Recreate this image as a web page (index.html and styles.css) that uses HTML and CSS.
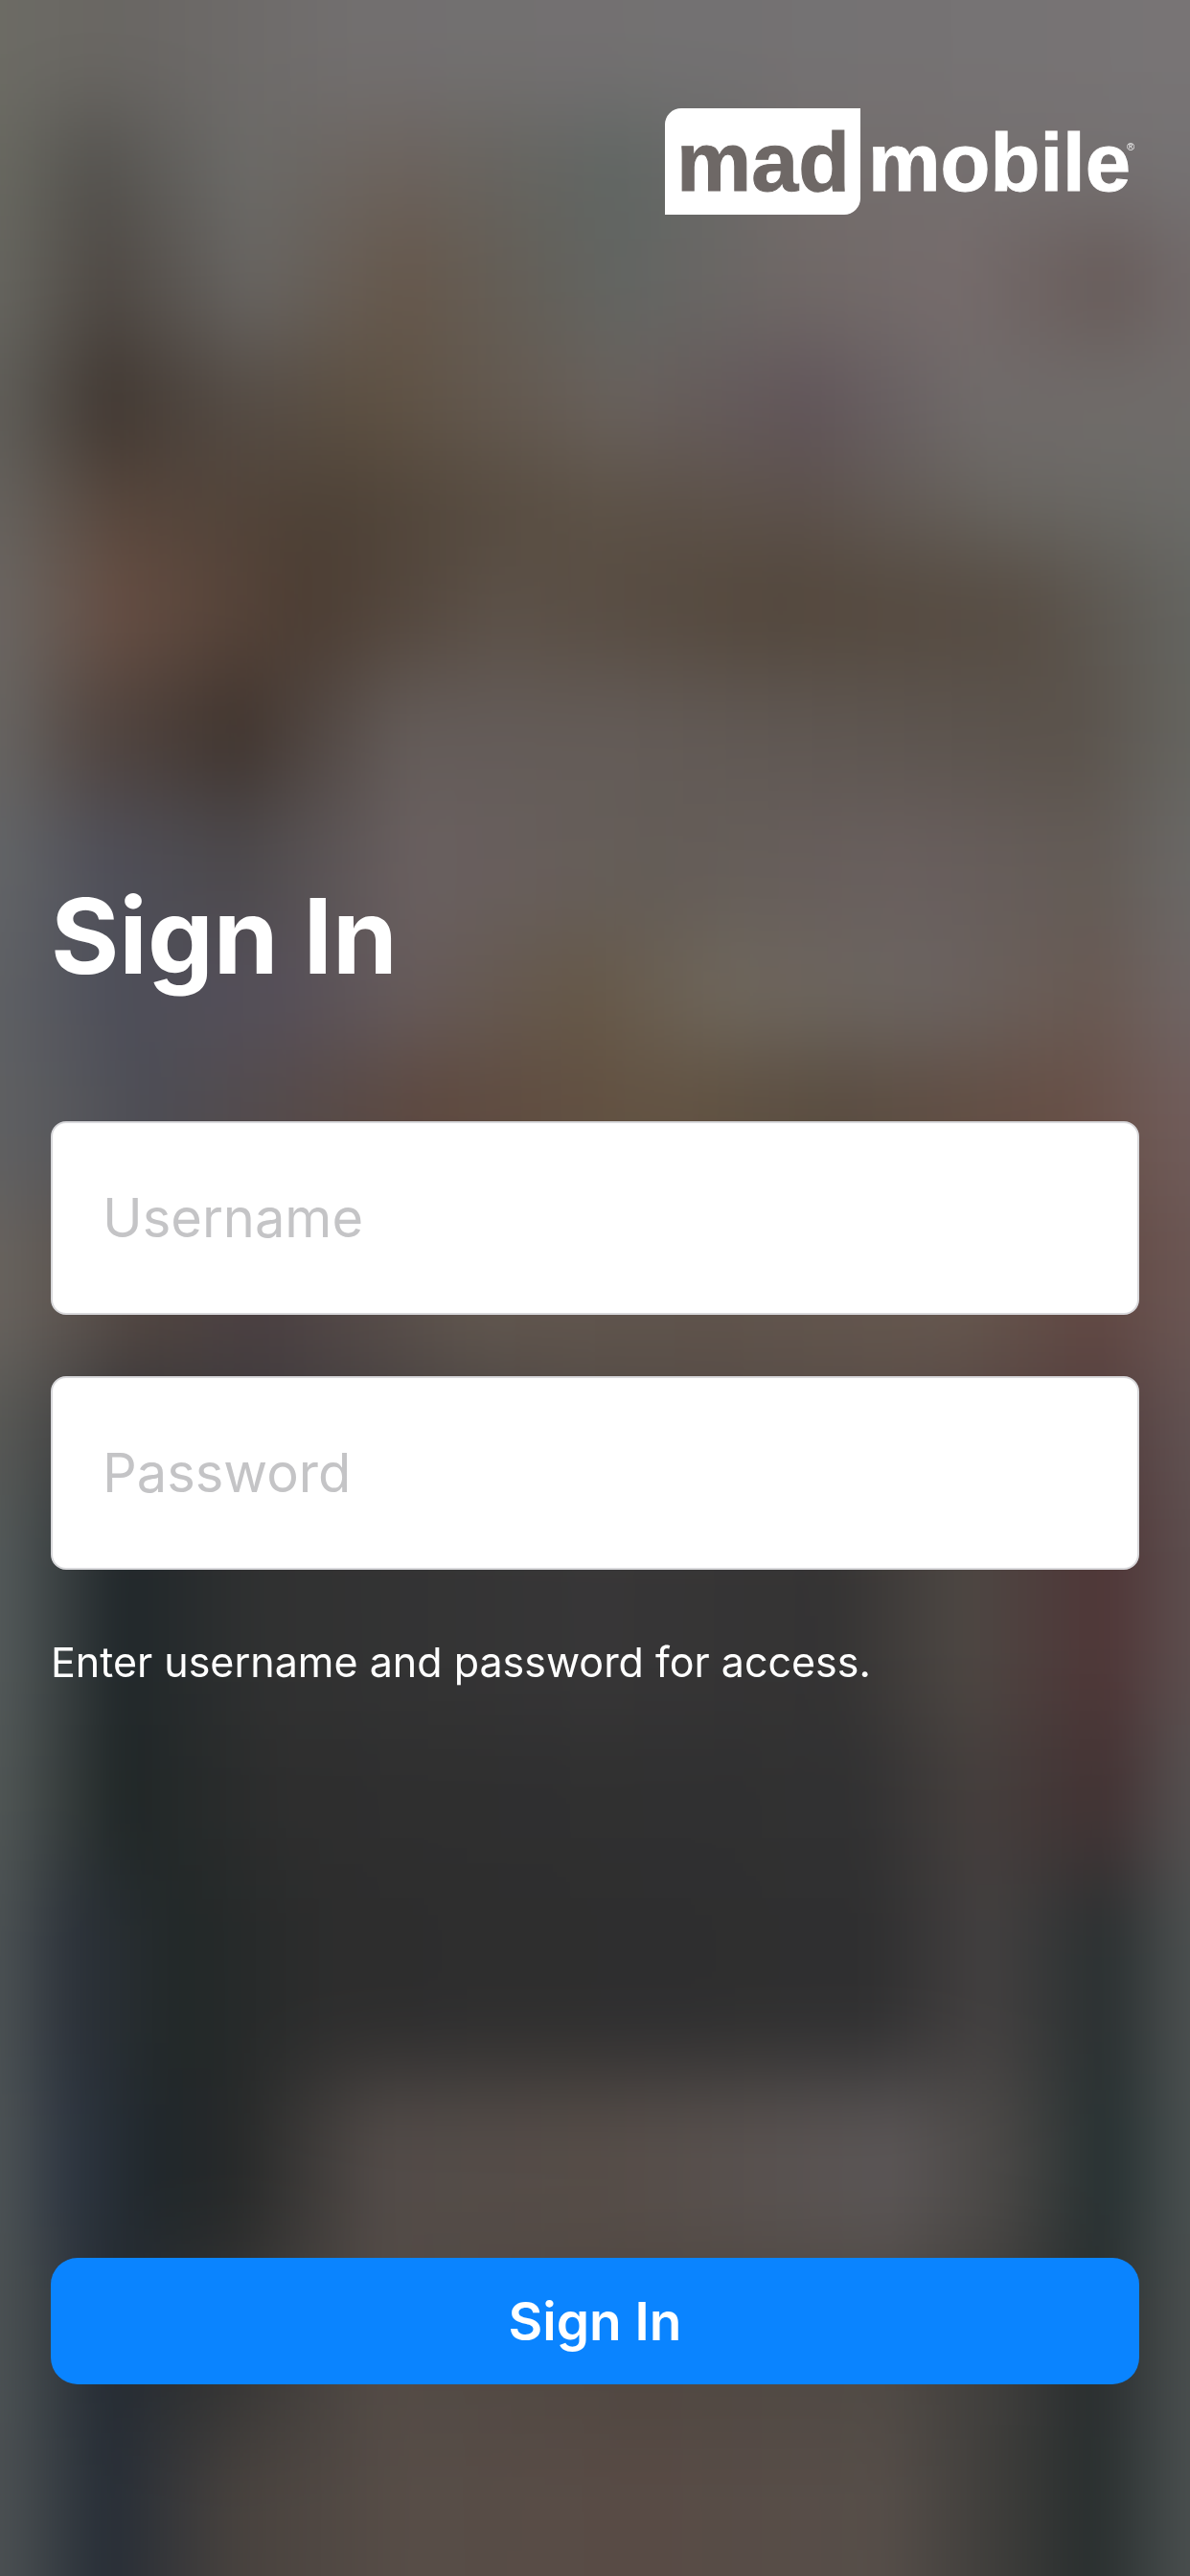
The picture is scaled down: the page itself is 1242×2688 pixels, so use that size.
FILE: index.html
```html
<!DOCTYPE html>
<html lang="en">
<head>
  <meta charset="UTF-8" />
  <meta name="viewport" content="width=device-width, initial-scale=1.0" />
  <title>Mad Mobile - Sign In</title>
  <link rel="stylesheet" href="styles.css">
</head>
<body>
  <!-- blurred store backdrop: horizontal colour bands, softened together -->
  <svg class="backdrop" viewBox="0 0 725 1568" preserveAspectRatio="none" aria-hidden="true">
    <defs>
      <filter id="soften" filterUnits="userSpaceOnUse" x="-60" y="-120" width="845" height="1808" color-interpolation-filters="sRGB">
        <feGaussianBlur stdDeviation="12 28" />
      </filter>
      <linearGradient id="across" gradientUnits="userSpaceOnUse" x1="0" y1="0" x2="725" y2="0" />
      <linearGradient id="b1" href="#across"><stop offset="0" stop-color="#6c6b64"/><stop offset=".1" stop-color="#696663"/><stop offset=".3" stop-color="#726f6f"/><stop offset=".6" stop-color="#737172"/><stop offset="1" stop-color="#787475"/></linearGradient>
      <linearGradient id="b2" href="#across"><stop offset="0" stop-color="#686860"/><stop offset=".08" stop-color="#54524e"/><stop offset=".2" stop-color="#6b6a67"/><stop offset=".34" stop-color="#6c635d"/><stop offset=".52" stop-color="#606663"/><stop offset=".68" stop-color="#746d6c"/><stop offset="1" stop-color="#757273"/></linearGradient>
      <linearGradient id="b3" href="#across"><stop offset="0" stop-color="#66655f"/><stop offset=".09" stop-color="#4f4944"/><stop offset=".21" stop-color="#686562"/><stop offset=".34" stop-color="#66584c"/><stop offset=".52" stop-color="#626562"/><stop offset=".66" stop-color="#6f6866"/><stop offset=".8" stop-color="#766c6c"/><stop offset=".93" stop-color="#675b59"/><stop offset="1" stop-color="#716969"/></linearGradient>
      <linearGradient id="b4" href="#across"><stop offset="0" stop-color="#5f5d58"/><stop offset=".09" stop-color="#403731"/><stop offset=".2" stop-color="#544b44"/><stop offset=".32" stop-color="#5e5143"/><stop offset=".52" stop-color="#69615c"/><stop offset=".68" stop-color="#61555a"/><stop offset=".82" stop-color="#706b6a"/><stop offset="1" stop-color="#706c6a"/></linearGradient>
      <linearGradient id="b5" href="#across"><stop offset="0" stop-color="#65615c"/><stop offset=".1" stop-color="#57463c"/><stop offset=".28" stop-color="#4d4136"/><stop offset=".5" stop-color="#5c5145"/><stop offset=".68" stop-color="#5d524c"/><stop offset=".85" stop-color="#696661"/><stop offset="1" stop-color="#6b6b68"/></linearGradient>
      <linearGradient id="b6" href="#across"><stop offset="0" stop-color="#6a6561"/><stop offset=".1" stop-color="#664e43"/><stop offset=".26" stop-color="#4c3d33"/><stop offset=".42" stop-color="#5c5148"/><stop offset=".65" stop-color="#53473c"/><stop offset=".86" stop-color="#574d44"/><stop offset="1" stop-color="#646460"/></linearGradient>
      <linearGradient id="b7" href="#across"><stop offset="0" stop-color="#676461"/><stop offset=".08" stop-color="#524641"/><stop offset=".2" stop-color="#40342e"/><stop offset=".34" stop-color="#645c59"/><stop offset=".52" stop-color="#645c58"/><stop offset=".7" stop-color="#5f5752"/><stop offset=".9" stop-color="#5a524b"/><stop offset="1" stop-color="#65645f"/></linearGradient>
      <linearGradient id="b8" href="#across"><stop offset="0" stop-color="#626467"/><stop offset=".09" stop-color="#4f4f59"/><stop offset=".2" stop-color="#4c494c"/><stop offset=".35" stop-color="#6a6060"/><stop offset=".55" stop-color="#645d57"/><stop offset=".76" stop-color="#695f5e"/><stop offset=".92" stop-color="#635b56"/><stop offset="1" stop-color="#6a6866"/></linearGradient>
      <linearGradient id="b9" href="#across"><stop offset="0" stop-color="#5e6064"/><stop offset=".1" stop-color="#4d4e59"/><stop offset=".24" stop-color="#57505a"/><stop offset=".34" stop-color="#665b5b"/><stop offset=".49" stop-color="#665848"/><stop offset=".61" stop-color="#6f675c"/><stop offset=".78" stop-color="#6b6461"/><stop offset=".92" stop-color="#695a53"/><stop offset="1" stop-color="#6f6564"/></linearGradient>
      <linearGradient id="b10" href="#across"><stop offset="0" stop-color="#5f6062"/><stop offset=".12" stop-color="#4d4d55"/><stop offset=".36" stop-color="#5d483f"/><stop offset=".55" stop-color="#635342"/><stop offset=".7" stop-color="#594c40"/><stop offset=".9" stop-color="#674f46"/><stop offset="1" stop-color="#705c5a"/></linearGradient>
      <linearGradient id="b11" href="#across"><stop offset="0" stop-color="#68635e"/><stop offset=".12" stop-color="#524641"/><stop offset=".22" stop-color="#4b4042"/><stop offset=".4" stop-color="#61574f"/><stop offset=".6" stop-color="#60544c"/><stop offset=".8" stop-color="#66584f"/><stop offset=".92" stop-color="#614843"/><stop offset="1" stop-color="#6b5653"/></linearGradient>
      <linearGradient id="b12" href="#across"><stop offset="0" stop-color="#575855"/><stop offset=".1" stop-color="#353538"/><stop offset=".25" stop-color="#3f3b3d"/><stop offset=".5" stop-color="#514944"/><stop offset=".75" stop-color="#564a45"/><stop offset=".93" stop-color="#523d3d"/><stop offset="1" stop-color="#615252"/></linearGradient>
      <linearGradient id="b13" href="#across"><stop offset="0" stop-color="#545a5a"/><stop offset=".1" stop-color="#20272a"/><stop offset=".22" stop-color="#303131"/><stop offset=".5" stop-color="#373637"/><stop offset=".7" stop-color="#343333"/><stop offset=".81" stop-color="#4d4743"/><stop offset=".93" stop-color="#4f3637"/><stop offset="1" stop-color="#5d4e4e"/></linearGradient>
      <linearGradient id="b14" href="#across"><stop offset="0" stop-color="#515756"/><stop offset=".1" stop-color="#202727"/><stop offset=".24" stop-color="#2e2e2e"/><stop offset=".72" stop-color="#313132"/><stop offset=".82" stop-color="#453f3d"/><stop offset=".93" stop-color="#423233"/><stop offset="1" stop-color="#555050"/></linearGradient>
      <linearGradient id="b15" href="#across"><stop offset="0" stop-color="#4c5254"/><stop offset=".06" stop-color="#2c323a"/><stop offset=".15" stop-color="#222828"/><stop offset=".28" stop-color="#2d2d2d"/><stop offset=".73" stop-color="#2f2f30"/><stop offset=".83" stop-color="#434040"/><stop offset=".93" stop-color="#2a3031"/><stop offset="1" stop-color="#4c5050"/></linearGradient>
      <linearGradient id="b16" href="#across"><stop offset="0" stop-color="#4d5355"/><stop offset=".06" stop-color="#2d3540"/><stop offset=".13" stop-color="#20272b"/><stop offset=".2" stop-color="#272929"/><stop offset=".32" stop-color="#524b48"/><stop offset=".5" stop-color="#564d48"/><stop offset=".75" stop-color="#5b5656"/><stop offset=".84" stop-color="#4a4846"/><stop offset=".93" stop-color="#263031"/><stop offset="1" stop-color="#4a5050"/></linearGradient>
      <linearGradient id="b17" href="#across"><stop offset="0" stop-color="#4c5254"/><stop offset=".09" stop-color="#242b33"/><stop offset=".18" stop-color="#313232"/><stop offset=".32" stop-color="#534b46"/><stop offset=".54" stop-color="#504741"/><stop offset=".74" stop-color="#504a45"/><stop offset=".84" stop-color="#3f3e3c"/><stop offset=".92" stop-color="#282d2e"/><stop offset="1" stop-color="#4a4f4f"/></linearGradient>
      <linearGradient id="b18" href="#across"><stop offset="0" stop-color="#4c5153"/><stop offset=".09" stop-color="#262d36"/><stop offset=".2" stop-color="#48423e"/><stop offset=".34" stop-color="#574d47"/><stop offset=".54" stop-color="#584b45"/><stop offset=".74" stop-color="#564e49"/><stop offset=".85" stop-color="#3b3b39"/><stop offset=".92" stop-color="#282e2e"/><stop offset="1" stop-color="#4a4f4f"/></linearGradient>
    </defs>
    <g filter="url(#soften)">
      <rect x="-40" y="-120" width="805" height="190" fill="url(#b1)" />
      <rect x="-40" y="70" width="805" height="65" fill="url(#b2)" />
      <rect x="-40" y="135" width="805" height="75" fill="url(#b3)" />
      <rect x="-40" y="210" width="805" height="70" fill="url(#b4)" />
      <rect x="-40" y="280" width="805" height="55" fill="url(#b5)" />
      <rect x="-40" y="335" width="805" height="75" fill="url(#b6)" />
      <rect x="-40" y="410" width="805" height="75" fill="url(#b7)" />
      <rect x="-40" y="485" width="805" height="85" fill="url(#b8)" />
      <rect x="-40" y="570" width="805" height="70" fill="url(#b9)" />
      <rect x="-40" y="640" width="805" height="90" fill="url(#b10)" />
      <rect x="-40" y="730" width="805" height="105" fill="url(#b11)" />
      <rect x="-40" y="835" width="805" height="75" fill="url(#b12)" />
      <rect x="-40" y="910" width="805" height="140" fill="url(#b13)" />
      <rect x="-40" y="1050" width="805" height="90" fill="url(#b14)" />
      <rect x="-40" y="1140" width="805" height="125" fill="url(#b15)" />
      <rect x="-40" y="1265" width="805" height="105" fill="url(#b16)" />
      <rect x="-40" y="1370" width="805" height="110" fill="url(#b17)" />
      <rect x="-40" y="1480" width="805" height="210" fill="url(#b18)" />
    </g>
  </svg>

  <div class="page">
    <header class="header">
      <svg class="logo" viewBox="0 0 495 111" role="img" aria-label="mad mobile">
        <path class="logo-box" d="M17 0H204V94A17 17 0 0 1 187 111H0V17A17 17 0 0 1 17 0Z" />
        <text class="logo-mad" x="12" y="86">mad</text>
        <text class="logo-mobile" x="212" y="86">mobile</text>
        <text class="logo-mark" x="482" y="44">®</text>
      </svg>
    </header>

    <form class="signin">
      <h1>Sign In</h1>
      <div class="fields">
        <input type="text" name="username" placeholder="Username" aria-label="Username" />
        <input type="password" name="password" placeholder="Password" aria-label="Password" />
      </div>
      <p class="hint">Enter username and password for access.</p>
      <button type="button" class="submit">Sign In</button>
    </form>
  </div>
</body>
</html>
```

FILE: styles.css
```css
* {
  box-sizing: border-box;
}

body {
  margin: 0;
  background: #4a4644;
  color: #fff;
  font-family: Inter, 'Liberation Sans', sans-serif;
}

.backdrop {
  position: fixed;
  top: 0;
  left: 0;
  width: 100%;
  height: 100%;
  z-index: -1;
}

.page {
  display: flex;
  flex-direction: column;
  min-height: 100vh;
  padding: 113px 53px 200px;
}

.header {
  display: flex;
  justify-content: flex-end;
}

.logo {
  display: block;
  width: 495px;
  height: 111px;
}

.logo-box {
  fill: #fff;
}

.logo-mad,
.logo-mobile {
  font-family: 'Liberation Sans', sans-serif;
  font-weight: 700;
  stroke-width: 1px;
}

.logo-mad {
  font-size: 88px;
  fill: #6e6866;
  stroke: #6e6866;
}

.logo-mobile {
  font-size: 85px;
  fill: #fff;
  stroke: #fff;
}

.logo-mark {
  font-family: 'Liberation Sans', sans-serif;
  font-size: 11px;
  fill: #fff;
}

.signin {
  display: flex;
  flex-direction: column;
  flex: 1;
  padding-top: 684px;
}

.signin h1 {
  margin: 0 0 126px;
  font-size: 109px;
  line-height: 136px;
  font-weight: 700;
}

.fields {
  display: flex;
  flex-direction: column;
  gap: 64px;
}

.fields input {
  width: 100%;
  height: 202px;
  padding: 0 52px;
  border: 2px solid #d9d9dc;
  border-radius: 16px;
  background: #fff;
  color: #222;
  font-family: inherit;
  font-size: 56px;
}

.fields input::placeholder {
  color: #c4c4c6;
  opacity: 1;
}

.hint {
  margin: 68px 0 64px;
  font-size: 43px;
  line-height: 56px;
}

.submit {
  height: 132px;
  margin-top: auto;
  border: none;
  border-radius: 28px;
  background: #0a84ff;
  color: #fff;
  font-family: inherit;
  font-size: 55px;
  font-weight: 600;
  cursor: pointer;
}
```
